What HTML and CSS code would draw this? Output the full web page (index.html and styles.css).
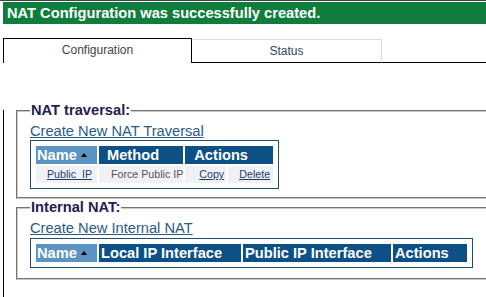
FILE: index.html
```html
<!DOCTYPE html>
<html>
<head>
    <title>NAT Configuration</title>
    <link rel="stylesheet" href="styles.css">
</head>
<body>
    <div class="page">
        <div class="message">NAT Configuration was successfully created.</div>

        <div class="tabs">
            <div class="tab active">Configuration</div>
            <div class="tab">Status</div>
            <div class="tab-fill"></div>
        </div>

        <div class="tab-content">
            <div class="group first">
                <div class="legend">NAT traversal:</div>
                <a href="#" class="create-link">Create New NAT Traversal</a>
                <table class="grid">
                    <tr>
                        <th class="sorted">Name <span class="sort-arrow"></span></th>
                        <th class="ind-8">Method</th>
                        <th class="ind-9" colspan="2">Actions</th>
                    </tr>
                    <tr>
                        <td class="w-61 ind-11"><a href="#">Public_IP</a></td>
                        <td class="w-84 ind-12 plain">Force Public IP</td>
                        <td class="w-41 ind-14"><a href="#">Copy</a></td>
                        <td class="w-45 ind-11"><a href="#">Delete</a></td>
                    </tr>
                </table>
            </div>

            <div class="group">
                <div class="legend">Internal NAT:</div>
                <a href="#" class="create-link">Create New Internal NAT</a>
                <table class="grid second">
                    <tr>
                        <th class="sorted w-61">Name <span class="sort-arrow"></span></th>
                        <th class="w-142 ind-2">Local IP Interface</th>
                        <th class="w-148 ind-2">Public IP Interface</th>
                        <th class="w-74 ind-2">Actions</th>
                    </tr>
                </table>
            </div>
        </div>
    </div>
</body>
</html>
```

FILE: styles.css
```css
body {
    margin: 0;
    font-family: "Liberation Sans", Arial, sans-serif;
    background-color: #fff;
    overflow: hidden;
}
.page {
    width: 540px;
    border-top: 1px solid #444;
    padding: 1px 0 0 3px;
}
.message {
    background-color: #0f7e3c;
    color: #fff;
    font-weight: bold;
    font-size: 14.67px;
    line-height: 22px;
    padding-left: 4px;
    white-space: nowrap;
}

/* tabs */
.tabs {
    display: flex;
    align-items: flex-end;
    margin-top: 14px;
}
.tab {
    width: 189px;
    height: 22px;
    line-height: 22px;
    text-align: center;
    font-size: 12px;
    color: #2f4a66;
    border-top: 1px solid #ddd;
    border-right: 1px solid #ddd;
    border-bottom: 1px solid #000;
}
.tab.active {
    width: 187px;
    height: 24px;
    line-height: 22px;
    color: #444;
    border: 1px solid #000;
    border-bottom: none;
}
.tab-fill {
    flex: 1;
    border-bottom: 1px solid #000;
}
.tab-content {
    height: 227px;
    border-left: 1px solid #000;
    border-bottom: 1px solid #000;
}

/* groups (legend sits over the top border) */
.group {
    margin: 8px 0 0 12px;
    padding: 0 0 10px 12px;
    border: 2px groove #c8c8c8;
}
.group.first {
    margin-top: 47px;
    padding-bottom: 8px;
}
.legend {
    width: fit-content;
    margin-top: -10px;
    padding: 0 1px;
    background-color: #fff;
    font-size: 14.67px;
    font-weight: bold;
    line-height: 17px;
    color: #1f2050;
    white-space: nowrap;
}
.create-link {
    display: block;
    width: fit-content;
    margin-top: 3px;
    font-size: 14.67px;
    line-height: 18px;
    color: #2b5b84;
    white-space: nowrap;
}

/* tables */
.grid {
    border: 1px solid #1f4f6f;
    padding: 3px;
    border-spacing: 2px;
}
.grid.second {
    margin-top: 1px;
}
.grid th {
    height: 18px;
    padding: 0;
    line-height: 18px;
    font-size: 14.67px;
    font-weight: bold;
    color: #fff;
    text-align: left;
    background-color: #0c5085;
    white-space: nowrap;
}
.grid th.sorted {
    background-color: #5b93c2;
    text-indent: 1px;
}
.sort-arrow {
    display: inline-block;
    width: 0;
    height: 0;
    border-left: 3px solid transparent;
    border-right: 3px solid transparent;
    border-bottom: 4px solid #000;
    vertical-align: 3px;
}
.grid td {
    height: 17px;
    padding: 0;
    line-height: 17px;
    font-size: 10.67px;
    background-color: #eff1f4;
    white-space: nowrap;
}
.grid td a {
    color: #1c3c70;
}
.grid td.plain {
    color: #555;
}
.w-41 { width: 41px; }
.w-45 { width: 45px; }
.w-61 { width: 61px; }
.w-74 { width: 74px; }
.w-84 { width: 84px; }
.w-142 { width: 142px; }
.w-148 { width: 148px; }
.ind-2 { text-indent: 2px; }
.ind-8 { text-indent: 8px; }
.ind-9 { text-indent: 9px; }
.ind-11 { text-indent: 11px; }
.ind-12 { text-indent: 12px; }
.ind-14 { text-indent: 14px; }
```
